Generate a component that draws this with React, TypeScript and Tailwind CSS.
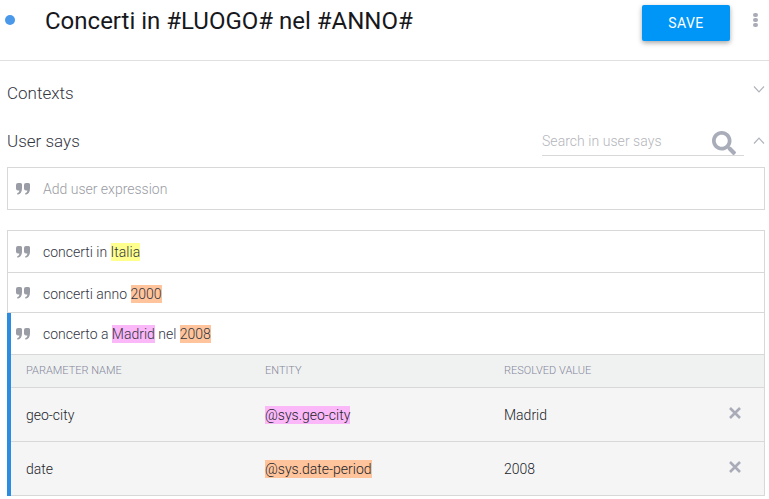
import React from 'react';
import { FaSearch } from 'react-icons/fa';

const QuoteIcon = () => (
  <svg width="14" height="12" viewBox="0 0 14 12" className="shrink-0 text-[#9a9ca6]" fill="currentColor">
    <path d="M0 2 a2 2 0 0 1 2-2 h2.5 a1.5 1.5 0 0 1 1.5 1.5 v4 c0 3.5-1.6 5.6-4.4 6.3 l-.5-1.5 c1.5-.5 2.2-1.5 2.3-2.8 H2 a2 2 0 0 1-2-2 z" />
    <path d="M8 2 a2 2 0 0 1 2-2 h2.5 a1.5 1.5 0 0 1 1.5 1.5 v4 c0 3.5-1.6 5.6-4.4 6.3 l-.5-1.5 c1.5-.5 2.2-1.5 2.3-2.8 H10 a2 2 0 0 1-2-2 z" />
  </svg>
);

const Chevron = ({ up }: { up?: boolean }) => (
  <svg width="12" height="7" viewBox="0 0 12 7" fill="none" stroke="#b0b3bd" strokeWidth="1.2">
    <path d={up ? 'M1 6.5 L6 1.2 L11 6.5' : 'M1 .5 L6 5.8 L11 .5'} />
  </svg>
);

const CloseIcon = () => (
  <svg width="12" height="12" viewBox="0 0 12 12" stroke="#a9acb8" strokeWidth="2.6">
    <path d="M1 1 L11 11 M11 1 L1 11" />
  </svg>
);

const Mark = ({ color, children }: { color: 'yellow' | 'pink' | 'orange'; children: React.ReactNode }) => {
  const colors = {
    yellow: 'bg-[#ffff8d]',
    pink: 'bg-[#fbb8f8]',
    orange: 'bg-[#ffc49b]',
  };
  return <span className={`${colors[color]} py-px`}>{children}</span>;
};

const params = [
  { name: 'geo-city', entity: '@sys.geo-city', color: 'pink' as const, value: 'Madrid' },
  { name: 'date', entity: '@sys.date-period', color: 'orange' as const, value: '2008' },
];

const App = () => {
  return (
    <div className="w-[769px] h-[499px] overflow-hidden bg-white font-['Roboto',sans-serif] font-light text-[#33353f]">
      <header className="h-[61px] border-b border-[#e0e0e0] flex items-start">
        <span className="ml-[5px] mt-[15px] w-[10px] h-[10px] rounded-full bg-[#4a98ea]" />
        <h1 className="ml-[30px] mt-[5px] text-[24px] leading-[32px] font-normal text-[#17181c] whitespace-nowrap">
          Concerti in #LUOGO# nel #ANNO#
        </h1>
        <button className="ml-auto mt-[5px] w-[88px] h-[36px] rounded-[2px] bg-[#0096f8] text-white text-[14px] font-normal tracking-[0.4px] shadow-[0_2px_5px_rgba(0,0,0,0.35)]">
          SAVE
        </button>
        <div className="ml-[23px] mr-[11px] mt-[13px] flex flex-col gap-[1px]">
          <span className="w-[5px] h-[4px] rounded-full bg-[#a9acb8]" />
          <span className="w-[5px] h-[4px] rounded-full bg-[#a9acb8]" />
          <span className="w-[5px] h-[4px] rounded-full bg-[#a9acb8]" />
        </div>
      </header>

      <section className="h-[58px] pl-[7px] pr-[4px] flex items-center justify-between">
        <span className="text-[17px] mt-[8px]">Contexts</span>
        <span className="-mt-[2px]"><Chevron /></span>
      </section>

      <section className="h-[48px] pl-[7px] pr-[4px] flex items-start justify-between">
        <span className="text-[17px] leading-[24px] mt-[10px]">User says</span>
        <div className="flex items-start">
          <div className="w-[202px] h-[37px] border-b border-[#d8d8d8] flex items-start justify-between">
            <span className="text-[14px] leading-[20px] mt-[12px] text-[#b4b5bb] tracking-[0.05px]">Search in user says</span>
            <FaSearch className="mt-[12px] mr-[8px] text-[#a9adb9]" size={24} />
          </div>
          <span className="ml-[9px] mt-[18px] leading-none"><Chevron up /></span>
        </div>
      </section>

      <div className="mx-[7px] w-[758px] h-[43px] border border-[#d8d8d8] flex items-center pl-[8px] gap-[13px] text-[14px] text-[#9a9ba4]">
        <QuoteIcon />
        <span className="mt-[1px]">Add user expression</span>
      </div>

      <div className="mt-[20px] ml-[7px] w-[758px] border-t border-r border-[#d8d8d8] text-[14px]">
        <div className="h-[42px] border-l border-b border-[#d8d8d8] flex items-center pl-[8px] gap-[13px]">
          <QuoteIcon />
          <span className="mt-[1px]">concerti in <Mark color="yellow">Italia</Mark></span>
        </div>
        <div className="h-[40px] border-l border-b border-[#d8d8d8] flex items-center pl-[8px] gap-[13px]">
          <QuoteIcon />
          <span className="mt-[3px]">concerti anno <Mark color="orange">2000</Mark></span>
        </div>
        <div className="border-l-4 border-[#2b8ce0]">
          <div className="h-[41px] flex items-center pl-[5px] gap-[13px]">
            <QuoteIcon />
            <span className="mt-[1px]">concerto a <Mark color="pink">Madrid</Mark> nel <Mark color="orange">2008</Mark></span>
          </div>
          <div className="h-[34px] grid grid-cols-[239px_239px_1fr] items-center pl-[15px] bg-[#f0f2f2] border-y border-[#d8d8d8] text-[11px] text-[#85879a]">
            <span>PARAMETER NAME</span>
            <span>ENTITY</span>
            <span>RESOLVED VALUE</span>
          </div>
          {params.map((p) => (
            <div key={p.name} className="h-[54px] grid grid-cols-[239px_239px_1fr_auto] items-center pl-[15px] pr-[23px] bg-[#f5f5f5] border-b border-[#d8d8d8] text-[14px] text-[#22242c]">
              <span className="mt-[1px]">{p.name}</span>
              <span className="mt-[1px]"><Mark color={p.color}>{p.entity}</Mark></span>
              <span className="mt-[1px]">{p.value}</span>
              <span className="-mt-[3px]"><CloseIcon /></span>
            </div>
          ))}
        </div>
      </div>
    </div>
  );
};

export default App;
